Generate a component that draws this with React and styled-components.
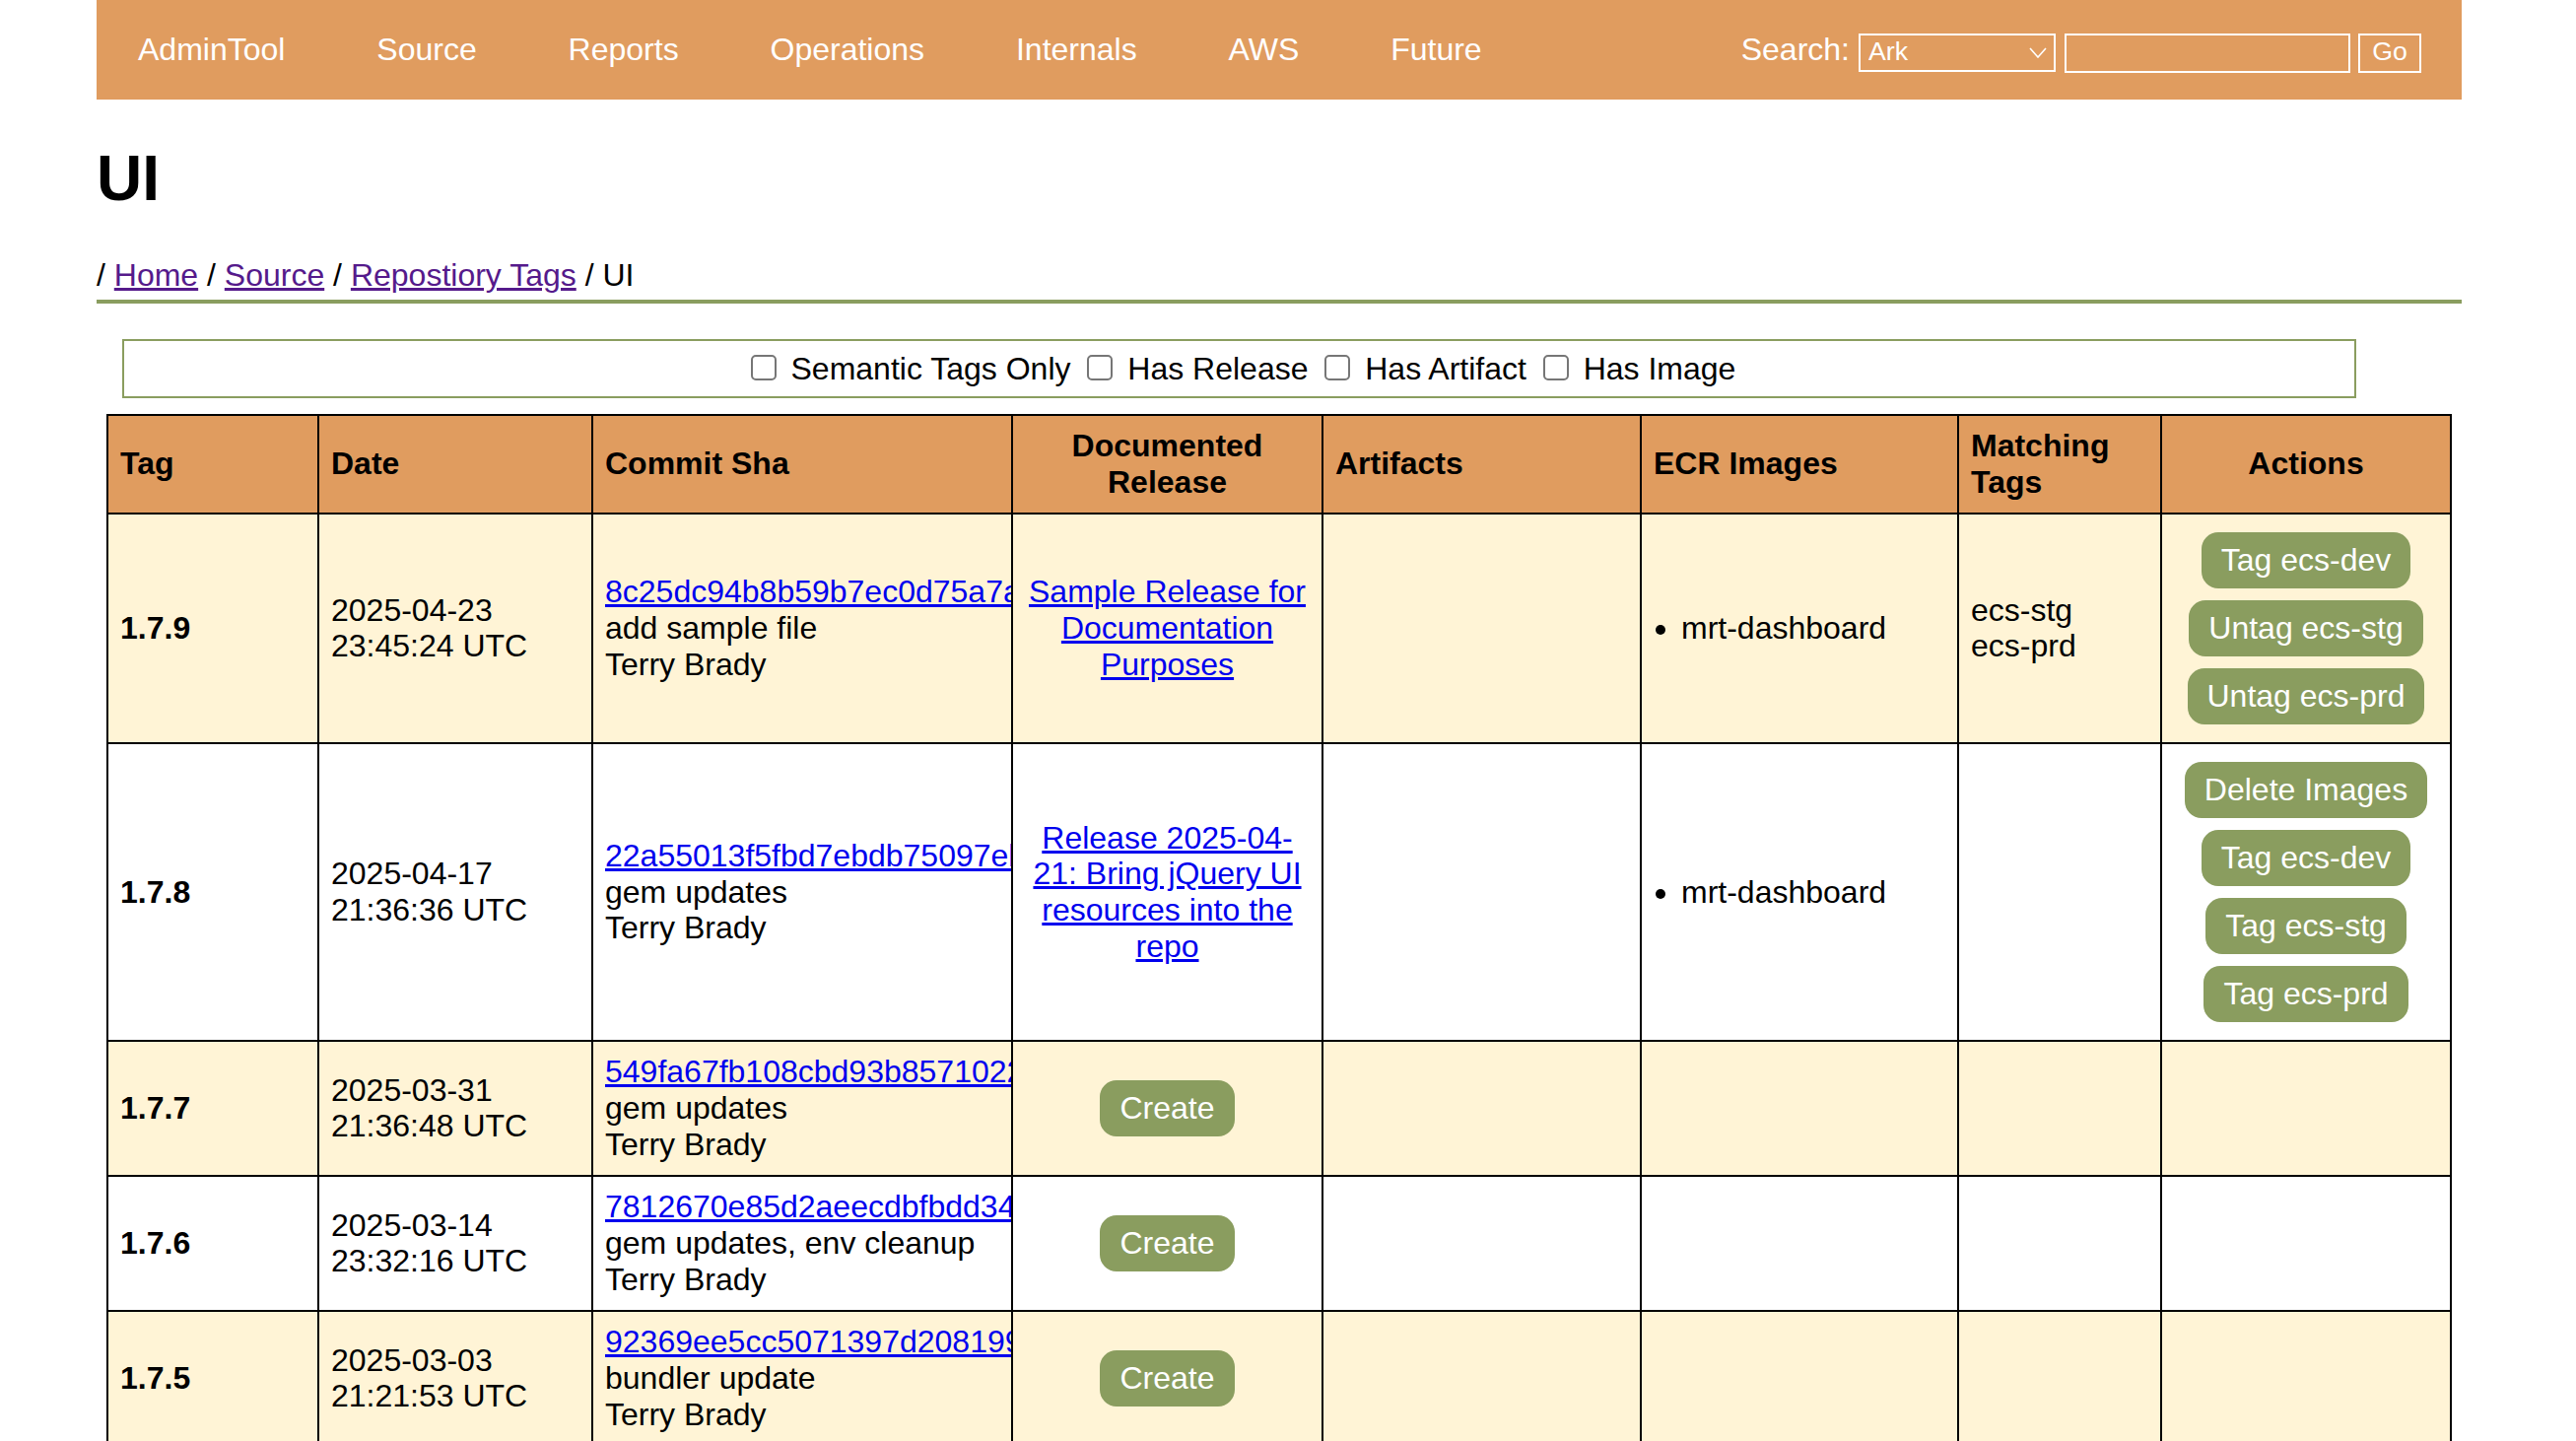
import React, { Fragment } from "react";
import styled, { createGlobalStyle } from "styled-components";

const orange = "#e09c5f";
const green = "#8a9d5f";
const cream = "#fff4d6";

const GlobalStyle = createGlobalStyle`
  html {
    overflow: hidden;
  }
  body {
    margin: 0;
    background: #fff;
    color: #000;
    font-family: "Liberation Sans", Arial, sans-serif;
    font-size: 32px;
    line-height: 37px;
  }
`;

const Page = styled.div`
  width: 2400px;
  margin-left: 98px;
`;

const Nav = styled.nav`
  display: flex;
  align-items: center;
  justify-content: space-between;
  height: 101px;
  padding: 0 41px 0 42px;
  background: ${orange};
  color: #fff;
`;

const NavLinks = styled.div`
  display: flex;
  gap: 92.9px;
`;

const NavLink = styled.a`
  color: #fff;
  text-decoration: none;
`;

const SearchForm = styled.form`
  display: flex;
  align-items: center;
  gap: 9px;
`;

const Controls = styled.div`
  display: flex;
  align-items: flex-start;
  gap: 8px;
  margin-top: 7px;
`;

const SelectWrap = styled.div`
  position: relative;
  width: 200px;
  height: 39px;
  margin-right: 1px;

  svg {
    position: absolute;
    top: 14px;
    right: 9px;
  }
`;

const Select = styled.select`
  appearance: none;
  box-sizing: border-box;
  display: block;
  width: 100%;
  height: 100%;
  padding: 0 0 3px 8px;
  border: 2px solid #fff;
  border-radius: 0;
  background: transparent;
  color: #fff;
  font: 26.67px "Liberation Sans", Arial, sans-serif;
`;

const SearchInput = styled.input`
  box-sizing: border-box;
  width: 290px;
  height: 40px;
  border: 2px solid #fff;
  background: transparent;
`;

const GoButton = styled.button`
  box-sizing: border-box;
  width: 64px;
  height: 40px;
  padding: 0 0 3px;
  border: 2px solid #fff;
  background: transparent;
  color: #fff;
  font: 26.67px "Liberation Sans", Arial, sans-serif;
`;

const Title = styled.h1`
  margin: 43px 0;
  font-size: 64px;
  line-height: 74px;
`;

const Breadcrumb = styled.div`
  padding-bottom: 6px;
  border-bottom: 4px solid ${green};

  a {
    color: #551a8b;
  }
`;

const FilterBox = styled.div`
  box-sizing: border-box;
  width: 2267px;
  height: 60px;
  margin: 36px 0 16px 26px;
  padding-top: 8px;
  border: 2px solid ${green};
  text-align: center;
`;

const Checkbox = styled.input`
  appearance: none;
  box-sizing: border-box;
  width: 26px;
  height: 26px;
  margin: 6px 6px 6px 8px;
  border: 2px solid #767676;
  border-radius: 5px;
  background: #fff;
  vertical-align: -7px;
`;

const Table = styled.table`
  table-layout: fixed;
  width: 2378px;
  margin-left: 10px;
  border-collapse: collapse;
`;

const Th = styled.th`
  padding: 12px 12px 13px;
  border: 2px solid #000;
  background: ${orange};
  line-height: 36.67px;
  text-align: ${(p) => (p.$center ? "center" : "left")};
  vertical-align: middle;
`;

const Td = styled.td`
  padding: 12px 12px 13px;
  border: 2px solid #000;
  overflow: hidden;
  line-height: 36.67px;
  text-align: ${(p) => (p.$center ? "center" : "left")};
  vertical-align: middle;
`;

const Row = styled.tr`
  background: ${(p) => (p.$odd ? cream : "#fff")};
`;

const TagCell = styled(Td)`
  font-weight: bold;
`;

const ActionCell = styled(Td)`
  padding-bottom: 12px;
  text-align: center;
`;

const Sha = styled.a`
  display: block;
  white-space: nowrap;
  color: #0000ee;
`;

const ReleaseLink = styled.a`
  color: #0000ee;
`;

const ImageList = styled.ul`
  margin: 0;
  padding-left: 28px;
`;

const Actions = styled.div`
  display: flex;
  flex-direction: column;
  align-items: center;
`;

const PillButton = styled.button`
  height: 57px;
  margin: 6px;
  padding: 0 20px;
  border: none;
  border-radius: 17px;
  background: ${green};
  color: #fff;
  font: 32px "Liberation Sans", Arial, sans-serif;
`;

const navItems = ["Source", "Reports", "Operations", "Internals", "AWS", "Future"];

const filters = ["Semantic Tags Only", "Has Release", "Has Artifact", "Has Image"];

const rows = [
  {
    tag: "1.7.9",
    date: "2025-04-23",
    time: "23:45:24 UTC",
    sha: "8c25dc94b8b59b7ec0d75a7a",
    message: "add sample file",
    release: "Sample Release for Documentation Purposes",
    image: "mrt-dashboard",
    matching: ["ecs-stg", "ecs-prd"],
    actions: ["Tag ecs-dev", "Untag ecs-stg", "Untag ecs-prd"],
  },
  {
    tag: "1.7.8",
    date: "2025-04-17",
    time: "21:36:36 UTC",
    sha: "22a55013f5fbd7ebdb75097eb",
    message: "gem updates",
    release: "Release 2025-04-21: Bring jQuery UI resources into the repo",
    image: "mrt-dashboard",
    matching: [],
    actions: ["Delete Images", "Tag ecs-dev", "Tag ecs-stg", "Tag ecs-prd"],
  },
  {
    tag: "1.7.7",
    date: "2025-03-31",
    time: "21:36:48 UTC",
    sha: "549fa67fb108cbd93b8571022",
    message: "gem updates",
  },
  {
    tag: "1.7.6",
    date: "2025-03-14",
    time: "23:32:16 UTC",
    sha: "7812670e85d2aeecdbfbdd34",
    message: "gem updates, env cleanup",
  },
  {
    tag: "1.7.5",
    date: "2025-03-03",
    time: "21:21:53 UTC",
    sha: "92369ee5cc5071397d208199",
    message: "bundler update",
  },
];

const App = () => (
  <Page>
    <GlobalStyle />
    <Nav>
      <NavLinks>
        <NavLink href="#">AdminTool</NavLink>
        {navItems.map((item) => (
          <NavLink href="#" key={item}>
            {item}
          </NavLink>
        ))}
      </NavLinks>
      <SearchForm>
        <span>Search:</span>
        <Controls>
          <SelectWrap>
            <Select defaultValue="Ark">
              <option>Ark</option>
            </Select>
            <svg width="18" height="11" viewBox="0 0 18 11" fill="none" stroke="#fff" strokeWidth="1.6">
              <path d="M1 1l8 9 8-9" />
            </svg>
          </SelectWrap>
          <SearchInput />
          <GoButton type="button">Go</GoButton>
        </Controls>
      </SearchForm>
    </Nav>

    <Title>UI</Title>
    <Breadcrumb>
      / <a href="#">Home</a> / <a href="#">Source</a> / <a href="#">Repostiory Tags</a> / UI
    </Breadcrumb>

    <FilterBox>
      {filters.map((label) => (
        <Fragment key={label}>
          <Checkbox type="checkbox" /> {label}{" "}
        </Fragment>
      ))}
    </FilterBox>

    <Table>
      <colgroup>
        <col style={{ width: 214 }} />
        <col style={{ width: 278 }} />
        <col style={{ width: 426 }} />
        <col style={{ width: 315 }} />
        <col style={{ width: 323 }} />
        <col style={{ width: 322 }} />
        <col style={{ width: 206 }} />
        <col style={{ width: 294 }} />
      </colgroup>
      <thead>
        <tr>
          <Th>Tag</Th>
          <Th>Date</Th>
          <Th>Commit Sha</Th>
          <Th $center>Documented Release</Th>
          <Th>Artifacts</Th>
          <Th>ECR Images</Th>
          <Th>Matching Tags</Th>
          <Th $center>Actions</Th>
        </tr>
      </thead>
      <tbody>
        {rows.map((row, i) => (
          <Row key={row.tag} $odd={i % 2 === 0}>
            <TagCell>{row.tag}</TagCell>
            <Td>
              {row.date}
              <br />
              {row.time}
            </Td>
            <Td>
              <Sha href="#">{row.sha}</Sha>
              {row.message}
              <br />
              Terry Brady
            </Td>
            <Td $center>
              {row.release ? (
                <ReleaseLink href="#">{row.release}</ReleaseLink>
              ) : (
                <PillButton>Create</PillButton>
              )}
            </Td>
            <Td />
            <Td>
              {row.image && (
                <ImageList>
                  <li>{row.image}</li>
                </ImageList>
              )}
            </Td>
            <Td>
              {row.matching &&
                row.matching.map((m) => <div key={m}>{m}</div>)}
            </Td>
            <ActionCell>
              {row.actions && (
                <Actions>
                  {row.actions.map((a) => (
                    <PillButton key={a}>{a}</PillButton>
                  ))}
                </Actions>
              )}
            </ActionCell>
          </Row>
        ))}
      </tbody>
    </Table>
  </Page>
);

export default App;
